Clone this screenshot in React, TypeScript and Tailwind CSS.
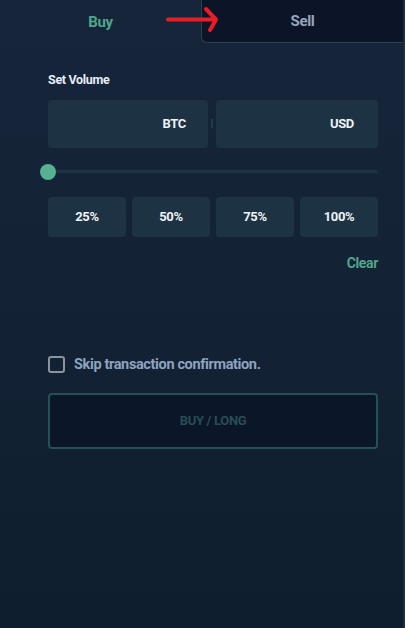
import { useState } from "react";

const font = { fontFamily: "Roboto, 'Liberation Sans', sans-serif" };

export default function App() {
  const [skip, setSkip] = useState(false);

  return (
    <div
      className="flex h-[628px] w-[405px] flex-col overflow-hidden border-r-2 border-[#1c2e44] bg-gradient-to-b from-[#17253b] to-[#0f1e2e]"
      style={font}
    >
      {/* Tabs */}
      <div className="relative flex h-[43px] shrink-0">
        <button type="button" className="flex-1 pt-[1px] text-[15px] font-bold tracking-tight text-[#4fa68c]">
          Buy
        </button>
        <button
          type="button"
          className="flex-1 rounded-bl-md border-b border-l border-[#27414a] bg-[#0b1527] pt-[1px] text-[15px] font-bold tracking-tight text-[#97a6bd]"
        >
          Sell
        </button>
        {/* red arrow annotation */}
        <svg className="pointer-events-none absolute left-[165px] top-[6px]" width="56" height="28" viewBox="0 0 56 28">
          <path d="M3 13.5 H50" stroke="#ea1c24" strokeWidth="4" strokeLinecap="round" fill="none" />
          <path d="M41 3 L51 13.5 L45 24" stroke="#ea1c24" strokeWidth="4" strokeLinecap="round" strokeLinejoin="round" fill="none" />
        </svg>
      </div>

      <div className="flex flex-col pl-12 pr-[25px] pt-[28px]">
        <div className="text-[12.5px] font-bold tracking-tight text-[#e6edf5]">Set Volume</div>

        <div className="mt-[10px] flex items-center gap-[3px]">
          <div className="flex h-[48px] flex-1 items-center justify-end rounded-sm bg-[#1d3242] pr-[22px] text-[13px] font-bold tracking-tight text-[#eef3f8]">
            BTC
          </div>
          <div className="h-[9px] w-[2px] bg-[#24394a]" />
          <div className="flex h-[48px] flex-1 items-center justify-end rounded-sm bg-[#1d3242] pr-[24px] text-[13px] font-bold tracking-tight text-[#eef3f8]">
            USD
          </div>
        </div>

        {/* Slider */}
        <div className="relative ml-[-8px] mt-[16px] flex h-[16px] items-center">
          <div className="ml-[8px] h-[3px] flex-1 rounded-full bg-[#1d3242]" />
          <div className="absolute left-0 top-0 h-[16px] w-[16px] rounded-full bg-[#56b094]" />
        </div>

        <div className="mt-[17px] grid grid-cols-4 gap-[6px]">
          {["25%", "50%", "75%", "100%"].map((p) => (
            <button
              key={p}
              type="button"
              className="h-[40px] rounded-sm bg-[#1d3242] text-[13px] font-bold tracking-tight text-[#eef3f8]"
            >
              {p}
            </button>
          ))}
        </div>

        <div className="mt-[16px] flex justify-end">
          <button type="button" className="text-[14px] font-bold tracking-tight text-[#4fa68c]">
            Clear
          </button>
        </div>

        <label className="mt-[80px] flex cursor-pointer items-center gap-[9px]">
          <span
            onClick={() => setSkip(!skip)}
            className="h-[17px] w-[17px] rounded-[3px] border-2 border-[#8b949c]"
          />
          <span className="text-[14.5px] font-bold tracking-tight text-[#8ea3bf]">Skip transaction confirmation.</span>
        </label>

        <button
          type="button"
          className="mt-[17px] h-[56px] w-full rounded-[4px] border-2 border-[#24505a] bg-[#0b1628] text-[13px] font-bold tracking-tight text-[#284d57]"
        >
          BUY / LONG
        </button>
      </div>
    </div>
  );
}
